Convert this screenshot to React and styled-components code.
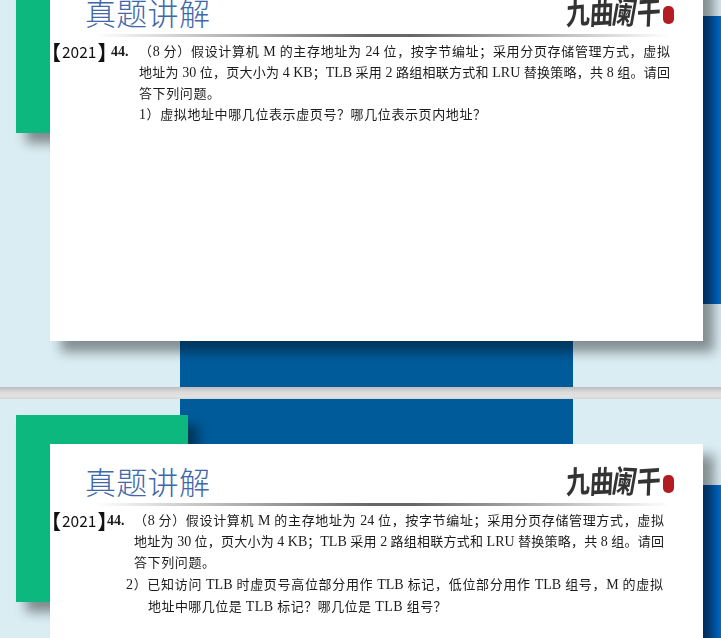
import React from "react";
import styled, { createGlobalStyle } from "styled-components";

const GlobalStyle = createGlobalStyle`
  html, body {
    margin: 0;
    padding: 0;
    background: #dcdcdc;
  }
`;

const Page = styled.div`
  width: 721px;
  height: 638px;
  overflow: hidden;
`;

const Slide = styled.section`
  position: relative;
  box-sizing: border-box;
  height: 457px;
  margin-top: ${(p) => p.$top || 0}px;
  padding: 45px 18px 0 50px;
  background: #daedf3;
  overflow: hidden;
`;

const Divider = styled.div`
  height: 12px;
  background: linear-gradient(#bdbdbd, #dcdcdc 45%, #e2e2e2 80%, #d4d4d4);
`;

const CenterBand = styled.div`
  position: absolute;
  top: 0;
  left: 180px;
  width: 393px;
  height: 100%;
  background: #005b9b;
`;

const GreenBlock = styled.div`
  position: absolute;
  top: 16px;
  left: 16px;
  width: 172px;
  height: 187px;
  background: #0cb87e;
  box-shadow: 10px 10px 11px rgba(0, 0, 0, 0.42);
`;

const Card = styled.div`
  position: relative;
  box-sizing: border-box;
  height: 366px;
  background: #fff;
  box-shadow: 11px 11px 11px rgba(0, 0, 0, 0.4);
`;

const SideBand = styled.div`
  position: absolute;
  top: 86px;
  right: 0;
  width: 18px;
  height: 288px;
  background: linear-gradient(90deg, #004f9e, #006dcf);
`;

const Header = styled.header`
  display: flex;
  justify-content: space-between;
  align-items: flex-start;
  height: 59px;
  padding: 0 29px 0 35px;
`;

const Title = styled.h1`
  margin: 14px 0 0;
  font: 300 31px/46px "Noto Sans CJK SC", sans-serif;
  letter-spacing: 0.3px;
  color: #3f68ab;
`;

const Logo = styled.div`
  display: flex;
  align-items: flex-end;
  gap: 3px;
  margin-top: 18px;
`;

const LogoText = styled.div`
  display: flex;
  font: 700 24px/36px "Noto Sans CJK SC", sans-serif;
  color: #333;
  filter: blur(0.35px);
`;

const LogoChar = styled.span`
  display: block;
  width: 23.5px;
  text-align: center;
  transform: rotate(${(p) => p.$tilt}deg) skewX(-6deg) scaleY(1.28);
`;

const Seal = styled.div`
  width: 11px;
  height: 18px;
  margin-bottom: 5px;
  border-radius: 5px;
  background: #b11d20;
`;

const Rule = styled.div`
  height: 3px;
  margin: 0 33px 0 45px;
  background: linear-gradient(90deg, #fff, #666 48%, #666 55%, #fff);
`;

const Question = styled.div`
  display: grid;
  grid-template-columns: ${(p) => p.$label}px ${(p) => p.$body}px;
  margin-top: 4px;
  font: 13px/21px "Liberation Serif", "Noto Sans CJK SC", serif;
  color: #1c1c1c;
  filter: blur(0.25px);
`;

const Label = styled.div`
  display: flex;
  white-space: nowrap;
`;

const Year = styled.span`
  display: flex;
  width: ${(p) => p.$width}px;
  font: 15.5px/21px "Noto Sans CJK SC", sans-serif;
  color: #111;
`;

const Bracket = styled.span`
  font-size: 20px;
  font-weight: 700;
  font-feature-settings: "halt";
  margin: 0 1px;
`;

const Number = styled.b`
  font-size: 14px;
`;

const Latin = styled.span`
  font-size: 14px;
`;

const Line = styled.div`
  white-space: nowrap;
  ${(p) => p.$track && `letter-spacing: ${p.$track}px;`}
  ${(p) => p.$fill && "white-space: normal; text-align: justify; text-align-last: justify;"}
`;

const SubLine = styled(Line)`
  margin-top: ${(p) => p.$gap || 0}px;
  margin-left: ${(p) => p.$indent}px;
  width: ${(p) => p.$width}px;
`;

const LOGO = [
  ["九", -6],
  ["曲", -3],
  ["阑", 4],
  ["干", -4],
];

// latin runs are set a bit larger than the CJK around them
const mixed = (text) =>
  text.split(/([A-Za-z0-9.]+)/).map((part, i) => (i % 2 ? <Latin key={i}>{part}</Latin> : part));

const LessonSlide = ({ top, label, body, year, children }) => (
  <Slide $top={top}>
    <CenterBand />
    <GreenBlock />
    <SideBand />
    <Card>
      <Header>
        <Title>真题讲解</Title>
        <Logo>
          <LogoText>
            {LOGO.map(([ch, tilt]) => (
              <LogoChar key={ch} $tilt={tilt}>
                {ch}
              </LogoChar>
            ))}
          </LogoText>
          <Seal />
        </Logo>
      </Header>
      <Rule />
      <Question $label={label} $body={body}>
        <Label>
          <Year $width={year}>
            <Bracket>【</Bracket>2021<Bracket>】</Bracket>
          </Year>
          <Number>44.</Number>
        </Label>
        <div>
          <Line $fill>{mixed("（8 分）假设计算机 M 的主存地址为 24 位，按字节编址；采用分页存储管理方式，虚拟")}</Line>
          <Line $fill>{mixed("地址为 30 位，页大小为 4 KB；TLB 采用 2 路组相联方式和 LRU 替换策略，共 8 组。请回")}</Line>
          <Line $track={0.6}>答下列问题。</Line>
          {children}
        </div>
      </Question>
    </Card>
  </Slide>
);

export default function App() {
  return (
    <Page>
      <GlobalStyle />
      <LessonSlide top={-70} label={89} body={531} year={61}>
        <Line $track={0.6}>{mixed("1）虚拟地址中哪几位表示虚页号？哪几位表示页内地址？")}</Line>
      </LessonSlide>
      <Divider />
      <LessonSlide label={84} body={530} year={57}>
        <SubLine $fill $gap={1} $indent={-8} $width={537}>
          {mixed("2）已知访问 TLB 时虚页号高位部分用作 TLB 标记，低位部分用作 TLB 组号，M 的虚拟")}
        </SubLine>
        <SubLine $track={0.45} $gap={1} $indent={14} $width={500}>
          {mixed("地址中哪几位是 TLB 标记？哪几位是 TLB 组号？")}
        </SubLine>
      </LessonSlide>
    </Page>
  );
}
